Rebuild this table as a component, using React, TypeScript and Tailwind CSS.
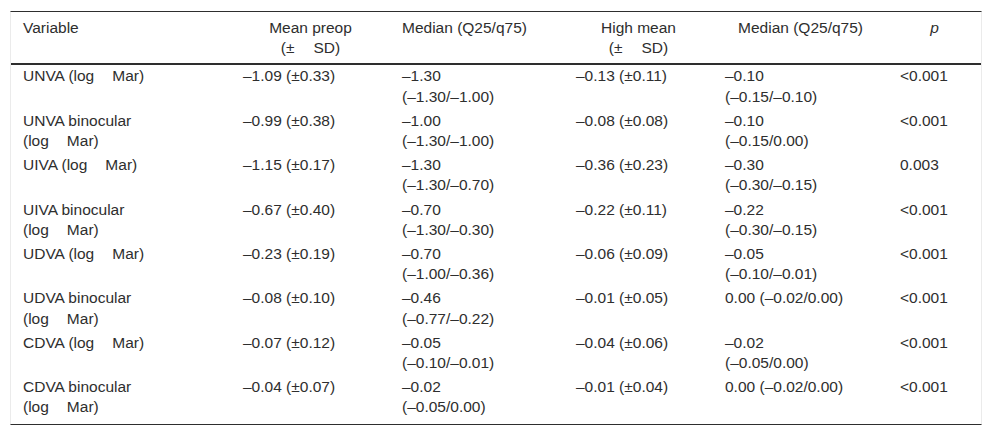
import type { ReactNode } from "react";

type Row = {
	label: ReactNode;
	pre: string;
	preMedian: string[];
	post: string;
	postMedian: string[];
	p: string;
};

function LogMar() {
	return (
		<>
			(log<span className="inline-block w-[18px]" />Mar)
		</>
	);
}

function PlusSd() {
	return (
		<>
			(±<span className="inline-block w-[19px]" />SD)
		</>
	);
}

const rows: Row[] = [
	{
		label: (
			<>
				UNVA <LogMar />
			</>
		),
		pre: "–1.09 (±0.33)",
		preMedian: ["–1.30", "(–1.30/–1.00)"],
		post: "–0.13 (±0.11)",
		postMedian: ["–0.10", "(–0.15/–0.10)"],
		p: "<0.001",
	},
	{
		label: (
			<>
				UNVA binocular
				<br />
				<LogMar />
			</>
		),
		pre: "–0.99 (±0.38)",
		preMedian: ["–1.00", "(–1.30/–1.00)"],
		post: "–0.08 (±0.08)",
		postMedian: ["–0.10", "(–0.15/0.00)"],
		p: "<0.001",
	},
	{
		label: (
			<>
				UIVA <LogMar />
			</>
		),
		pre: "–1.15 (±0.17)",
		preMedian: ["–1.30", "(–1.30/–0.70)"],
		post: "–0.36 (±0.23)",
		postMedian: ["–0.30", "(–0.30/–0.15)"],
		p: "0.003",
	},
	{
		label: (
			<>
				UIVA binocular
				<br />
				<LogMar />
			</>
		),
		pre: "–0.67 (±0.40)",
		preMedian: ["–0.70", "(–1.30/–0.30)"],
		post: "–0.22 (±0.11)",
		postMedian: ["–0.22", "(–0.30/–0.15)"],
		p: "<0.001",
	},
	{
		label: (
			<>
				UDVA <LogMar />
			</>
		),
		pre: "–0.23 (±0.19)",
		preMedian: ["–0.70", "(–1.00/–0.36)"],
		post: "–0.06 (±0.09)",
		postMedian: ["–0.05", "(–0.10/–0.01)"],
		p: "<0.001",
	},
	{
		label: (
			<>
				UDVA binocular
				<br />
				<LogMar />
			</>
		),
		pre: "–0.08 (±0.10)",
		preMedian: ["–0.46", "(–0.77/–0.22)"],
		post: "–0.01 (±0.05)",
		postMedian: ["0.00 (–0.02/0.00)"],
		p: "<0.001",
	},
	{
		label: (
			<>
				CDVA <LogMar />
			</>
		),
		pre: "–0.07 (±0.12)",
		preMedian: ["–0.05", "(–0.10/–0.01)"],
		post: "–0.04 (±0.06)",
		postMedian: ["–0.02", "(–0.05/0.00)"],
		p: "<0.001",
	},
	{
		label: (
			<>
				CDVA binocular
				<br />
				<LogMar />
			</>
		),
		pre: "–0.04 (±0.07)",
		preMedian: ["–0.02", "(–0.05/0.00)"],
		post: "–0.01 (±0.04)",
		postMedian: ["0.00 (–0.02/0.00)"],
		p: "<0.001",
	},
];

function Lines({ lines }: { lines: string[] }) {
	return (
		<>
			{lines.map((line, i) => (
				<div key={i}>{line}</div>
			))}
		</>
	);
}

export default function App() {
	const th = "px-[12px] pt-[6px] pb-[5px] align-top font-normal";
	const td = "px-[12px] pt-[1px] pb-[3px] align-top";

	return (
		<div className="min-h-[435px] bg-white px-[10px] pt-[11px] font-['Liberation_Sans',Arial,sans-serif] text-[15.5px] leading-[20.2px] text-[#2e2e2e]">
			<div className="border-x border-x-[#ebebeb] border-y border-y-[#2e2e2e] pb-[3px]">
				<table className="w-full table-fixed border-collapse">
					<colgroup>
						<col className="w-[220px]" />
						<col className="w-[159px]" />
						<col className="w-[174px]" />
						<col className="w-[149px]" />
						<col className="w-[175px]" />
						<col />
					</colgroup>
					<thead>
						<tr className="border-b-2 border-[#2e2e2e]">
							<th className={`${th} text-left`}>Variable</th>
							<th className={`${th} text-center`}>
								Mean preop
								<br />
								<PlusSd />
							</th>
							<th className={`${th} text-left`}>Median (Q25/q75)</th>
							<th className={`${th} text-center`}>
								High mean
								<br />
								<PlusSd />
							</th>
							<th className={`${th} text-center`}>Median (Q25/q75)</th>
							<th className={`${th} text-center italic`}>p</th>
						</tr>
					</thead>
					<tbody>
						{rows.map((r, i) => (
							<tr key={i}>
								<td className={`${td} whitespace-nowrap`}>
									<div className="min-h-[40.4px]">{r.label}</div>
								</td>
								<td className={td}>{r.pre}</td>
								<td className={`${td} whitespace-nowrap`}>
									<Lines lines={r.preMedian} />
								</td>
								<td className={td}>{r.post}</td>
								<td className={`${td} whitespace-nowrap`}>
									<Lines lines={r.postMedian} />
								</td>
								<td className={td}>{r.p}</td>
							</tr>
						))}
					</tbody>
				</table>
			</div>
		</div>
	);
}
